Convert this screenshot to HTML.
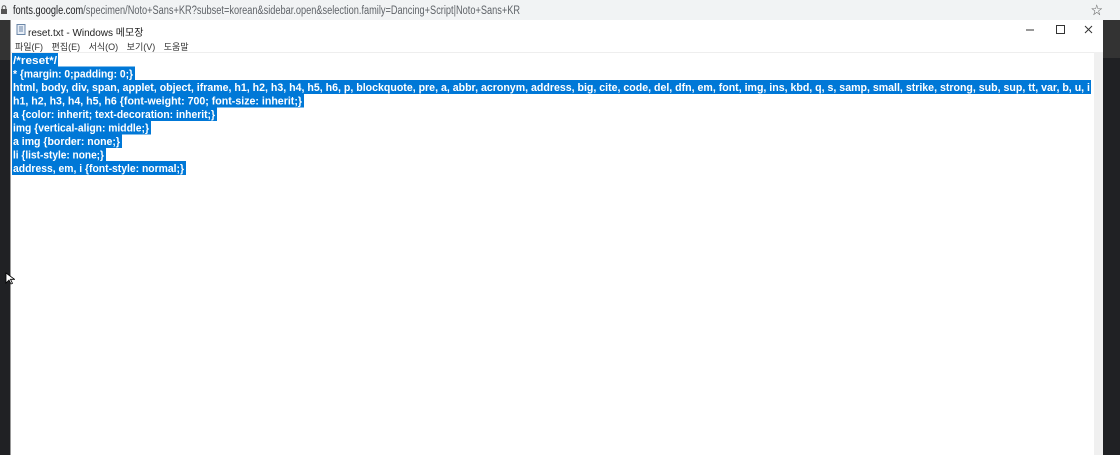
<!DOCTYPE html>
<html><head><meta charset="utf-8"><style>
body{margin:0;width:1120px;height:455px;overflow:hidden;background:#202124;position:relative;font-family:"Liberation Sans","Noto Sans CJK KR",sans-serif}
.addr{position:absolute;left:0;top:0;width:1120px;height:20px;background:#f1f3f4}
.win{position:absolute;left:10px;top:20px;width:1092px;height:435px;background:#fff;border-left:1px solid #999}
.title{position:absolute;left:17px;top:4px;font-size:10px;color:#222}
.menu{position:absolute;left:4px;top:20px;font-size:9px;color:#333;word-spacing:6px}
.sb{position:absolute;left:1083px;top:32px;width:9px;height:403px;background:#f0f0f0}
</style></head><body>
<div class="addr">
<svg style="position:absolute;left:1px;top:5px" width="6" height="9"><rect x="0" y="4" width="6" height="5" fill="#555"/><path d="M1.2 4V2.5a1.8 1.8 0 013.6 0V4" stroke="#555" fill="none"/></svg>
<svg style="position:absolute;left:0;top:0" width="560" height="20" font-family="Liberation Sans, sans-serif" font-size="11.5"><text x="13" y="14" textLength="507" lengthAdjust="spacingAndGlyphs" fill="#5f6368"><tspan fill="#202124">fonts.google.com</tspan>/specimen/Noto+Sans+KR?subset=korean&amp;sidebar.open&amp;selection.family=Dancing+Script|Noto+Sans+KR</text></svg>
<span style="position:absolute;left:1091px;top:2px;font-size:11.5px;color:#555">☆</span>
</div>
<div style="position:absolute;left:0;top:20px;width:10px;height:40px;background:#333"></div>
<div style="position:absolute;left:1103px;top:20px;width:17px;height:38px;background:#333"></div>
<div class="win">
<svg style="position:absolute;left:5px;top:4px" width="10" height="11"><rect x="1" y="0.5" width="8" height="10" fill="#e8eef6" stroke="#6b87a8"/><path d="M3 3h4M3 5h4M3 7h4" stroke="#6b87a8"/></svg>
<div class="title">reset.txt - Windows 메모장</div>
<svg style="position:absolute;left:1010px;top:4px" width="75" height="12"><path d="M5 6h8" stroke="#333"/><rect x="35.5" y="1.5" width="8" height="8" fill="none" stroke="#333"/><path d="M64 2l7 7M71 2l-7 7" stroke="#333"/></svg>
<div class="menu">파일(F) 편집(E) 서식(O) 보기(V) 도움말</div>
<div style="position:absolute;left:0;top:32px;width:1083px;height:1px;background:#eee"></div>
<div class="sb"></div>
</div>
<svg style="position:absolute;left:0;top:0" width="1120" height="455" font-family="Liberation Sans, sans-serif" font-weight="bold" font-size="11" fill="#fff">
<g fill="#0078d7">
<rect x="12" y="53" width="46" height="14"/>
<rect x="12" y="66.5" width="123" height="14"/>
<rect x="12" y="80" width="1079" height="14"/>
<rect x="12" y="93.5" width="292" height="14"/>
<rect x="12" y="107" width="205" height="14"/>
<rect x="12" y="120.5" width="139" height="14"/>
<rect x="12" y="134" width="110" height="14"/>
<rect x="12" y="147.5" width="94" height="14"/>
<rect x="12" y="161" width="174" height="14"/>
</g>
<text x="13" y="64" textLength="44" lengthAdjust="spacingAndGlyphs">/*reset*/</text>
<text x="13" y="77.5" textLength="120" lengthAdjust="spacingAndGlyphs">* {margin: 0;padding: 0;}</text>
<text x="13" y="91" textLength="1077" lengthAdjust="spacingAndGlyphs">html, body, div, span, applet, object, iframe, h1, h2, h3, h4, h5, h6, p, blockquote, pre, a, abbr, acronym, address, big, cite, code, del, dfn, em, font, img, ins, kbd, q, s, samp, small, strike, strong, sub, sup, tt, var, b, u, i</text>
<text x="13" y="104.5" textLength="289" lengthAdjust="spacingAndGlyphs">h1, h2, h3, h4, h5, h6 {font-weight: 700; font-size: inherit;}</text>
<text x="13" y="118" textLength="202" lengthAdjust="spacingAndGlyphs">a {color: inherit; text-decoration: inherit;}</text>
<text x="13" y="131.5" textLength="136" lengthAdjust="spacingAndGlyphs">img {vertical-align: middle;}</text>
<text x="13" y="145" textLength="107" lengthAdjust="spacingAndGlyphs">a img {border: none;}</text>
<text x="13" y="158.5" textLength="91" lengthAdjust="spacingAndGlyphs">li {list-style: none;}</text>
<text x="13" y="172" textLength="171" lengthAdjust="spacingAndGlyphs">address, em, i {font-style: normal;}</text>
</svg>
<svg style="position:absolute;left:5px;top:272px" width="10" height="14"><path d="M1 1v10l3-3 2 4 1.5-.7-2-4h4z" fill="#fff" stroke="#000" stroke-width=".8"/></svg>
</body></html>
